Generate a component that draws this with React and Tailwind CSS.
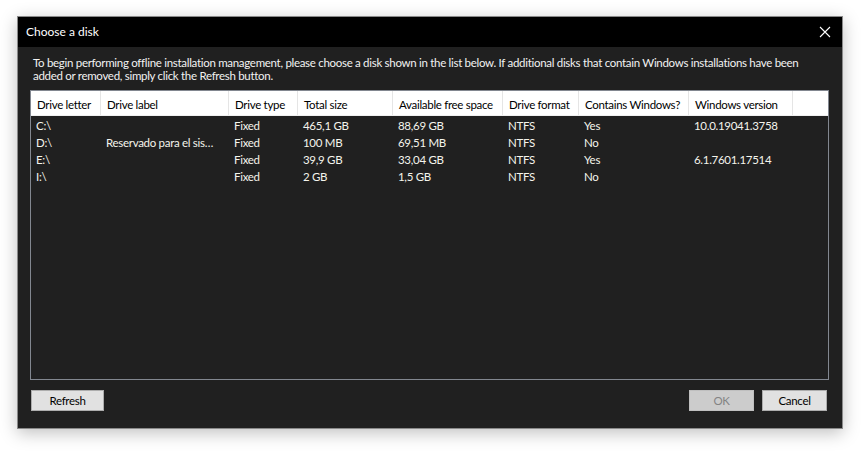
const columns = [
  { title: 'Drive letter', width: 'w-[70px]' },
  { title: 'Drive label', width: 'w-[128px]' },
  { title: 'Drive type', width: 'w-[69px]' },
  { title: 'Total size', width: 'w-[95px]' },
  { title: 'Available free space', width: 'w-[110px]' },
  { title: 'Drive format', width: 'w-[76px]' },
  { title: 'Contains Windows?', width: 'w-[110px]' },
  { title: 'Windows version', width: 'w-[104px]' },
]

const disks = [
  ['C:\\', '', 'Fixed', '465,1 GB', '88,69 GB', 'NTFS', 'Yes', '10.0.19041.3758'],
  ['D:\\', 'Reservado para el sis…', 'Fixed', '100 MB', '69,51 MB', 'NTFS', 'No', ''],
  ['E:\\', '', 'Fixed', '39,9 GB', '33,04 GB', 'NTFS', 'Yes', '6.1.7601.17514'],
  ['I:\\', '', 'Fixed', '2 GB', '1,5 GB', 'NTFS', 'No', ''],
]

const App = () => {
  return (
    <div
      className="w-[864px] h-[451px] bg-white pt-[16px] pl-[17px]"
      style={{ fontFamily: '"Segoe UI", Lato, "Liberation Sans", Arial, sans-serif' }}
    >
      {/* Dialog window */}
      <div className="w-[826px] h-[413px] border border-[#8a8a8a] bg-[#202020] flex flex-col shadow-[0_4px_16px_rgba(0,0,0,0.25)]">
        {/* Title bar */}
        <div className="h-[30px] shrink-0 bg-black flex items-center justify-between pl-[8px] pr-[10px]">
          <span className="text-white text-[12px]">Choose a disk</span>
          <svg width="12" height="12" viewBox="0 0 12 12" className="mr-[1px]">
            <path d="M1 1 L11 11 M11 1 L1 11" stroke="#ffffff" strokeWidth="1.1" />
          </svg>
        </div>

        {/* Body */}
        <div className="flex-1 flex flex-col px-[12px] pt-[9px] pb-[15px] text-[11.5px] tracking-[-0.3px]">
          <p className="text-[#f2f2f2] leading-[13px] px-[3px] whitespace-nowrap">
            To begin performing offline installation management, please choose a disk shown in the list below. If additional disks that contain Windows installations have been
            <br />
            added or removed, simply click the Refresh button.
          </p>

          {/* Disk list */}
          <div className="mt-[8px] h-[290px] w-[799px] shrink-0 border border-[#828790] flex flex-col">
            <div className="h-[25px] shrink-0 bg-white flex border-b border-[#f0f0f0]">
              {columns.map((col) => (
                <div
                  key={col.title}
                  className={`${col.width} shrink-0 border-r border-[#e5e5e5] flex items-center pl-[6px] pt-[3px] text-black whitespace-nowrap overflow-hidden`}
                >
                  {col.title}
                </div>
              ))}
              <div className="flex-1"></div>
            </div>
            <div className="flex flex-col pt-[1px]">
              {disks.map((row) => (
                <div key={row[0]} className="h-[17px] flex items-center">
                  {row.map((cell, i) => (
                    <div
                      key={i}
                      className={`${columns[i].width} shrink-0 pl-[5px] text-[#f4f4ec] whitespace-nowrap overflow-hidden`}
                    >
                      {cell}
                    </div>
                  ))}
                </div>
              ))}
            </div>
          </div>

          {/* Buttons */}
          <div className="mt-[10px] flex items-center justify-between pl-[1px] pr-[3px]">
            <button className="w-[73px] h-[21px] bg-[#e1e1e1] border border-[#adadad] text-black">
              Refresh
            </button>
            <div className="flex gap-[8px]">
              <button className="w-[65px] h-[21px] bg-[#cccccc] border border-[#bfbfbf] text-[#838383]">
                OK
              </button>
              <button className="w-[65px] h-[21px] bg-[#e1e1e1] border border-[#adadad] text-black">
                Cancel
              </button>
            </div>
          </div>
        </div>
      </div>
    </div>
  )
}

export default App
